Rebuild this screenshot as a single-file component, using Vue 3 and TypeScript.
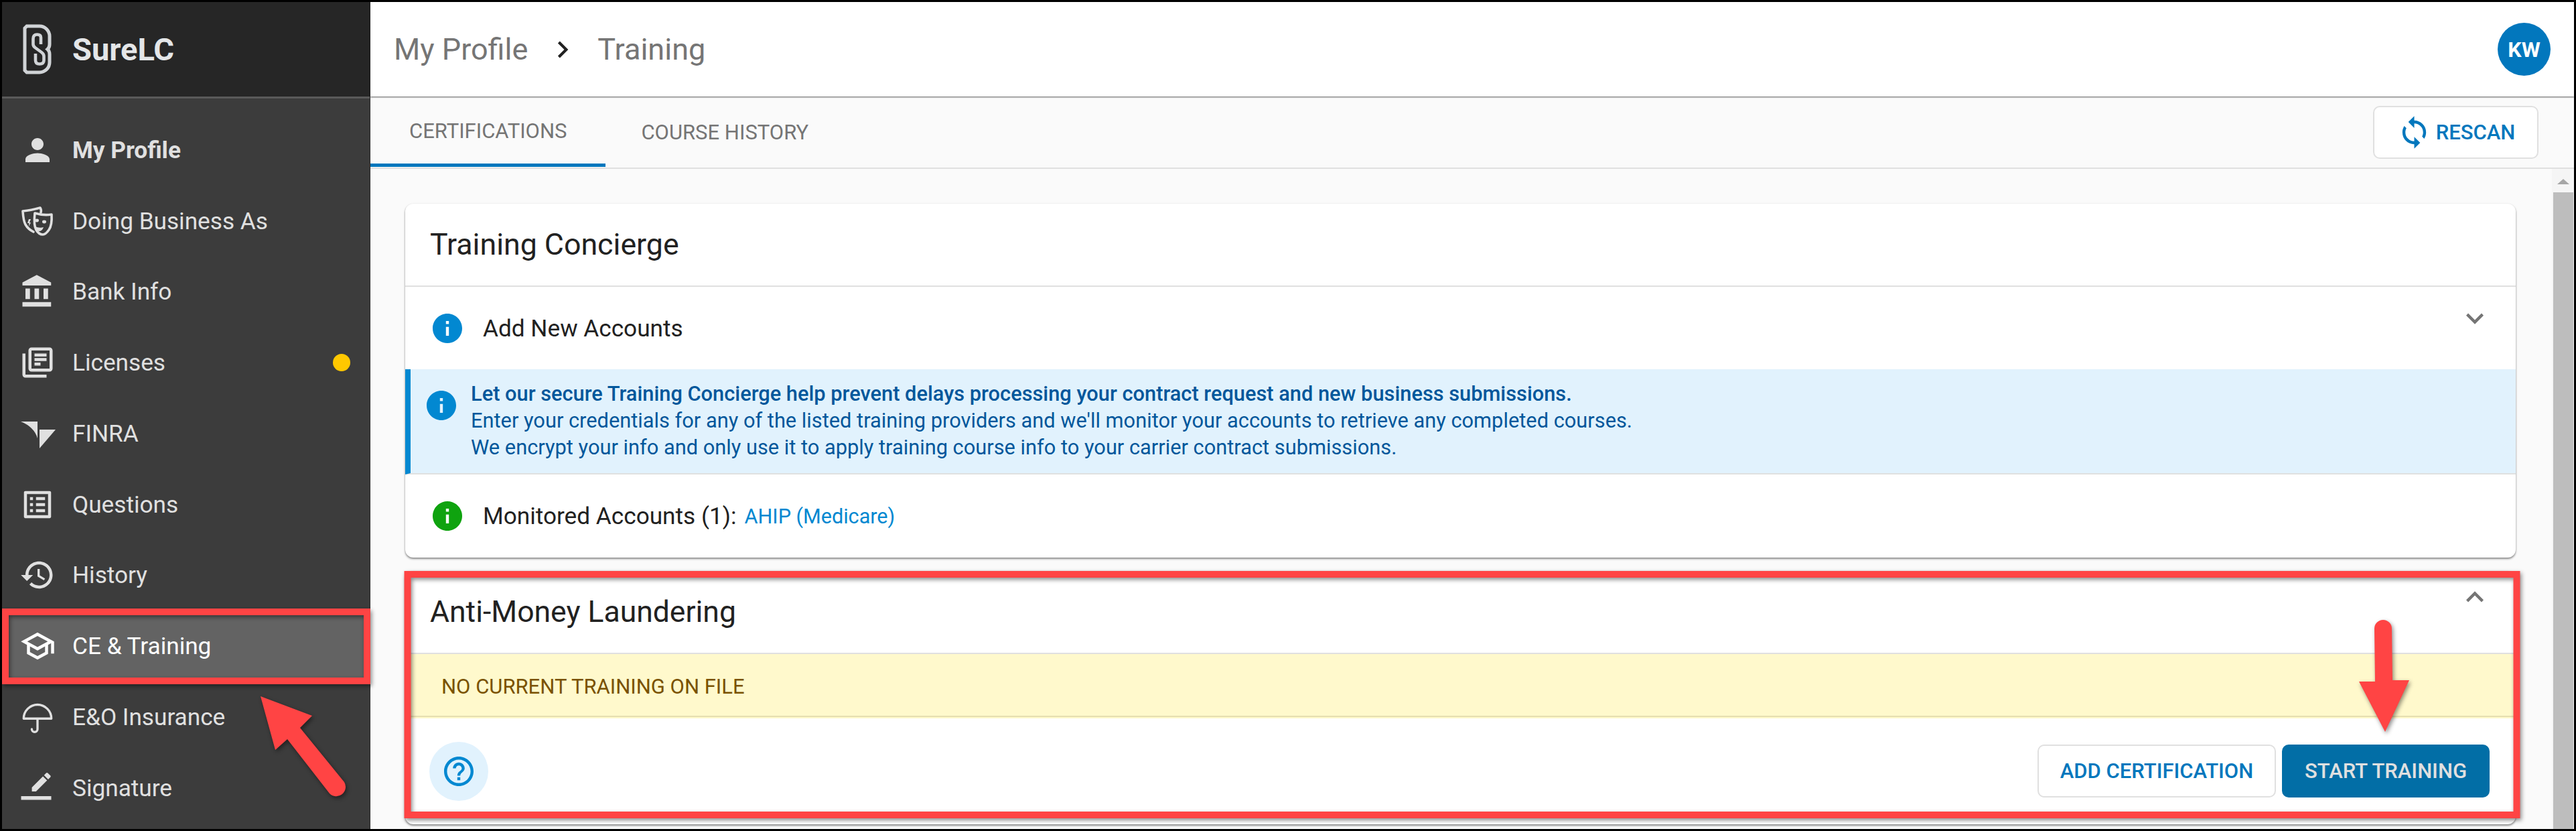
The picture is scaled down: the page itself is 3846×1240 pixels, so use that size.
<script setup lang="ts">
interface Shape { d: string; stroke?: number }
interface NavItem { label: string; box: string; w: number; h: number; shapes: Shape[]; active?: boolean; strong?: boolean; dot?: boolean }

const nav: NavItem[] = [
  { label: 'My Profile', strong: true, box: '0 0 24 24', w: 54, h: 54, shapes: [{ d: 'M12 12c2.21 0 4-1.79 4-4s-1.79-4-4-4-4 1.79-4 4 1.79 4 4 4zm0 2c-2.67 0-8 1.34-8 4v2h16v-2c0-2.66-5.33-4-8-4z' }] },
  { label: 'Doing Business As', box: '0 0 64 60', w: 64, h: 60, shapes: [
    { d: 'M28 18 Q41 22 53 20 Q54 36 49 43 Q44 50 40 50 Q34 50 30 43 Q26 36 28 18Z', stroke: 3.6 },
    { d: 'M37 17 Q38 13 36 10 Q22 14 10 15 Q11 30 14 35 Q18 42 26 46', stroke: 3.6 },
    { d: 'M28 29a3 2.4 0 1 0 6 0a3 2.4 0 1 0-6 0zM39 31a3 2.4 0 1 0 6 0a3 2.4 0 1 0-6 0zM28 38 Q35 41 41 39 Q39 45 34 45 Q30 44 28 38Z' },
    { d: 'M19 27 L22 27 L20 32 L22 32 L19 38 L19.5 33 L17 33Z' }
  ] },
  { label: 'Bank Info', box: '0 0 24 24', w: 54, h: 54, shapes: [{ d: 'M4 10v7h3v-7H4zm6 0v7h3v-7h-3zM2 22h19v-3H2v3zm14-12v7h3v-7h-3zm-4.5-9L2 6v2h19V6l-9.5-5z' }] },
  { label: 'Licenses', dot: true, box: '0 0 24 24', w: 54, h: 54, shapes: [{ d: 'M4 6H2v14c0 1.1.9 2 2 2h14v-2H4V6zm16-4H8c-1.1 0-2 .9-2 2v12c0 1.1.9 2 2 2h12c1.1 0 2-.9 2-2V4c0-1.1-.9-2-2-2zm0 14H8V4h12v12zM10 9h8v2h-8zm0 3h4v2h-4zm0-6h8v2h-8z' }] },
  { label: 'FINRA', box: '0 -3 70 60', w: 70, h: 60, shapes: [{ d: 'M10 9H35V34Q30 17 10 9ZM38 21H62L38 49Z' }] },
  { label: 'Questions', box: '0 0 24 24', w: 54, h: 54, shapes: [{ d: 'M19 5v14H5V5h14m1.1-2H3.9c-.5 0-.9.4-.9.9v16.2c0 .4.4.9.9.9h16.2c.4 0 .9-.5.9-.9V3.9c0-.5-.5-.9-.9-.9zM11 7h6v2h-6V7zm0 4h6v2h-6v-2zm0 4h6v2h-6zM7 7h2v2H7zm0 4h2v2H7zm0 4h2v2H7z' }] },
  { label: 'History', box: '0 0 24 24', w: 54, h: 54, shapes: [{ d: 'M13 3c-4.97 0-9 4.03-9 9H1l3.89 3.89.07.14L9 12H6c0-3.87 3.13-7 7-7s7 3.13 7 7-3.13 7-7 7c-1.93 0-3.68-.79-4.94-2.06l-1.42 1.42C8.27 19.99 10.51 21 13 21c4.97 0 9-4.03 9-9s-4.03-9-9-9zm-1 5v5l4.28 2.54.72-1.21-3.5-2.08V8H12z' }] },
  { label: 'CE & Training', active: true, box: '0 0 24 24', w: 54, h: 54, shapes: [{ d: 'M12 3L1 9l4 2.18v6L12 21l7-3.82v-6l2-1.09V17h2V9L12 3zm6.82 6L12 12.72 5.18 9 12 5.28 18.82 9zM17 15.99l-5 2.73-5-2.73v-3.72L12 15l5-2.73v3.72z' }] },
  { label: 'E&O Insurance', box: '0 0 24 24', w: 54, h: 54, shapes: [{ d: 'M2.8 13a9.2 9.2 0 0 1 18.4 0zM12 13V20a1.9 1.9 0 0 1-3.8 0', stroke: 1.5 }] },
  { label: 'Signature', box: '0 0 54 54', w: 54, h: 54, shapes: [{ d: 'M41.3 15.6L35.1 9.4 18.6 25.9V32h6.2zM46.2 10.7c.64-.64.64-1.68 0-2.33L42.3 4.5a1.64 1.64 0 0 0-2.33 0L36.75 7.7 42.95 13.9zM2.5 39h45v5.5h-45z' }] }
]

const info = 'M12 2C6.48 2 2 6.48 2 12s4.48 10 10 10 10-4.48 10-10S17.52 2 12 2zm1 15h-2v-6h2v6zm0-8h-2V7h2v2z'
const help = 'M11 18h2v-2h-2v2zm1-16C6.48 2 2 6.48 2 12s4.48 10 10 10 10-4.48 10-10S17.52 2 12 2zm0 18c-4.41 0-8-3.59-8-8s3.59-8 8-8 8 3.59 8 8-3.59 8-8 8zm0-14c-2.21 0-4 1.79-4 4h2c0-1.1.9-2 2-2s2 .9 2 2c0 2-3 1.75-3 5h2c0-2.25 3-2.5 3-5 0-2.21-1.79-4-4-4z'
const sync = 'M12 4V1L8 5l4 4V6c3.31 0 6 2.69 6 6 0 1.01-.25 1.97-.7 2.8l1.46 1.46C19.54 15.03 20 13.57 20 12c0-4.42-3.58-8-8-8zm0 14c-3.31 0-6-2.69-6-6 0-1.01.25-1.97.7-2.8L5.24 7.74C4.46 8.97 4 10.43 4 12c0 4.42 3.58 8 8 8v3l4-4-4-4v3z'
</script>

<template>
  <div class="frame">
    <aside class="sidebar">
      <div class="brand">
        <svg class="logo" viewBox="0 0 43 75" width="43" height="75" aria-hidden="true">
          <path d="M6 3H25a15 15 0 0 1 15 15V30Q40 35 37 37.5Q40 40 40 45V57a15 15 0 0 1-15 15H6L3 69V6Z" fill="none" stroke="#d0d3d6" stroke-width="5"/>
          <path d="M27 30V20Q27 15.5 21.5 15.5Q15.5 15.5 15.5 22V30Q15.5 33 19 35.5L28 42Q31.5 44.5 31.5 48V54Q31.5 59.5 25 59.5Q19 59.5 19 54V44" fill="none" stroke="#d0d3d6" stroke-width="4.6"/>
        </svg>
        <span class="brand-name">SureLC</span>
      </div>
      <nav class="nav">
        <a v-for="item in nav" :key="item.label" class="nav-row" :class="{ active: item.active, strong: item.strong }">
          <span class="nav-icon">
            <svg :viewBox="item.box" :width="item.w" :height="item.h" aria-hidden="true">
              <path
                v-for="(s, i) in item.shapes"
                :key="i"
                :d="s.d"
                :fill="s.stroke ? 'none' : 'currentColor'"
                :stroke="s.stroke ? 'currentColor' : 'none'"
                :stroke-width="s.stroke || 0"
                stroke-linejoin="round"
                stroke-linecap="round"
              />
            </svg>
          </span>
          <span class="nav-label">{{ item.label }}</span>
          <span v-if="item.dot" class="dot"></span>
        </a>
      </nav>
    </aside>

    <main class="main">
      <header class="topbar">
        <div class="crumbs">
          <span>My Profile</span>
          <svg class="crumb-sep" viewBox="0 0 24 24" width="50" height="50" aria-hidden="true"><path d="M10 6L8.59 7.41 13.17 12l-4.58 4.59L10 18l6-6z" fill="#212121"/></svg>
          <span>Training</span>
        </div>
        <div class="avatar">KW</div>
      </header>

      <div class="tabbar">
        <div class="tabs">
          <div class="tab on">CERTIFICATIONS</div>
          <div class="tab two">COURSE HISTORY</div>
        </div>
        <button class="btn rescan">
          <svg viewBox="0 0 24 24" width="53" height="53" aria-hidden="true"><path :d="sync" fill="#0277bd"/></svg>
          <span>RESCAN</span>
        </button>
      </div>

      <div class="body">
        <div class="scroll">
          <section class="card">
            <h2 class="card-head">Training Concierge</h2>
            <div class="row expand">
              <svg class="ic" viewBox="2 2 20 20" width="44" height="44" aria-hidden="true"><path :d="info" fill="#0288d1"/></svg>
              <span class="row-text">Add New Accounts</span>
              <svg class="chev" viewBox="0 0 24 24" width="52" height="52" aria-hidden="true"><path d="M16.59 8.59L12 13.17 7.41 8.59 6 10l6 6 6-6z" fill="#757575"/></svg>
            </div>
            <div class="banner">
              <svg class="banner-ic" viewBox="2 2 20 20" width="44" height="44" aria-hidden="true"><path :d="info" fill="#0288d1"/></svg>
              <div class="banner-text">
                <div class="b">Let our secure Training Concierge help prevent delays processing your contract request and new business submissions.</div>
                <div>Enter your credentials for any of the listed training providers and we'll monitor your accounts to retrieve any completed courses.</div>
                <div>We encrypt your info and only use it to apply training course info to your carrier contract submissions.</div>
              </div>
            </div>
            <div class="row monitored">
              <svg class="ic" viewBox="2 2 20 20" width="44" height="44" aria-hidden="true"><path :d="info" fill="#0fa30f"/></svg>
              <span class="row-text">Monitored Accounts (1):</span>
              <a class="link">AHIP (Medicare)</a>
            </div>
          </section>

          <section class="card second">
            <div class="card-head split">
              <h2 class="title">Anti-Money Laundering</h2>
              <svg class="chev up" viewBox="0 0 24 24" width="52" height="52" aria-hidden="true"><path d="M12 8l-6 6 1.41 1.41L12 10.83l4.59 4.58L18 14z" fill="#757575"/></svg>
            </div>
            <div class="warning"><span>NO CURRENT TRAINING ON FILE</span></div>
            <div class="foot">
              <button class="help">
                <svg viewBox="2 2 20 20" width="44" height="44" aria-hidden="true"><path :d="help" fill="#0288d1"/></svg>
              </button>
              <div class="actions">
                <button class="btn add">ADD CERTIFICATION</button>
                <button class="btn start">START TRAINING</button>
              </div>
            </div>
          </section>
        </div>
        <div class="scrollbar">
          <div class="sb-arrow"></div>
          <div class="sb-thumb"></div>
        </div>
      </div>
    </main>

    <svg class="marks" width="3846" height="1240" viewBox="0 0 3846 1240" aria-hidden="true">
      <g class="mark">
        <rect x="8" y="913" width="540" height="103" fill="none" stroke="#ff4444" stroke-width="10"/>
        <rect x="608.5" y="857" width="3149" height="359" fill="none" stroke="#ff4444" stroke-width="10"/>
      </g>
      <g class="mark">
        <path d="M389 1039L466 1068L448 1086L514 1167A14 14 0 0 1 492 1184L429 1103L411 1119Z" fill="#ff4444"/>
        <path d="M3545 938A13 13 0 0 1 3571 938L3572 1015L3597 1015L3561 1092L3522 1017L3546 1017Z" fill="#ff4444"/>
      </g>
    </svg>
  </div>
</template>

<style scoped>
.frame {
  position: relative;
  width: 3846px;
  height: 1240px;
  box-sizing: border-box;
  border: 3px solid #000;
  display: flex;
  overflow: hidden;
  background: #fafafa;
  font-family: Roboto, "Liberation Sans", sans-serif;
  color: #212121;
}
.sidebar {
  width: 550px;
  flex: none;
  background: #3c3c3c;
  border-right: 1px solid #2c2c2c;
  box-sizing: border-box;
  color: #e0e0e0;
  display: flex;
  flex-direction: column;
}
.brand {
  height: 144px;
  flex: none;
  box-sizing: border-box;
  background: #262626;
  border-bottom: 3px solid #5a5a5a;
  display: flex;
  align-items: center;
  padding-left: 31px;
  gap: 31px;
}
.logo { flex: none; }
.brand-name { font-size: 47px; font-weight: 700; color: #e4e6e8; }
.nav { padding-top: 24px; display: flex; flex-direction: column; }
.nav-row {
  height: 105.75px;
  display: flex;
  align-items: center;
  padding: 0 29px 0 23px;
  font-size: 35.2px;
}
.nav-row.strong { font-weight: 700; }
.nav-row.active { background: #636363; color: #fff; }
.nav-icon { width: 59px; margin-right: 23px; display: flex; justify-content: center; flex: none; }
.nav-icon svg { flex: none; display: block; }
.nav-label { flex: 1; }
.dot { width: 26px; height: 26px; border-radius: 50%; background: #ffc800; }

.main { flex: 1; min-width: 0; display: flex; flex-direction: column; }
.topbar {
  height: 141px;
  flex: none;
  background: #fff;
  box-shadow: 0 1px 2px rgba(0, 0, 0, 0.65);
  display: flex;
  align-items: center;
  justify-content: space-between;
  padding: 0 35px 0 35px;
  position: relative;
}
.crumbs { display: flex; align-items: center; font-size: 45px; color: #757575; }
.crumb-sep { margin: 0 27px 0 27px; }
.avatar {
  width: 79px;
  height: 79px;
  border-radius: 50%;
  background: #0277bd;
  color: #fff;
  font-weight: 700;
  font-size: 32px;
  display: flex;
  align-items: center;
  justify-content: center;
}
.tabbar {
  height: 108px;
  flex: none;
  box-sizing: border-box;
  background: #fafafa;
  border-bottom: 2px solid #e0e0e0;
  display: flex;
  align-items: stretch;
  justify-content: space-between;
  padding-right: 53px;
}
.tabs { display: flex; }
.tab {
  font-size: 31px;
  color: #757575;
  display: flex;
  align-items: center;
  padding: 0 58px;
}
.tab.on { border-bottom: 5px solid #0277bd; padding-top: 2px; margin-bottom: 1px; }
.tab.two { padding: 0 0 0 53px; }
.btn {
  font-family: inherit;
  font-size: 31px;
  font-weight: 500;
  border-radius: 10px;
  cursor: pointer;
}
.rescan {
  align-self: center;
  width: 247px;
  height: 79px;
  box-sizing: border-box;
  background: #fff;
  border: 2px solid #e0e0e0;
  color: #0277bd;
  display: flex;
  align-items: center;
  justify-content: center;
  gap: 6px;
  padding: 0;
}
.body { flex: 1; min-height: 0; display: flex; }
.scroll { flex: 1; min-width: 0; padding: 52px 54px 0 52px; overflow: hidden; }
.card {
  background: #fff;
  border-radius: 12px;
  box-shadow: 0 2px 3px rgba(0, 0, 0, 0.45), 0 0 3px rgba(0, 0, 0, 0.06);
}
.card.second { margin-top: 20px; height: 378px; box-sizing: border-box; }
.card-head {
  margin: 0;
  height: 124px;
  box-sizing: border-box;
  border-bottom: 2px solid #e0e0e0;
  padding-left: 37px;
  font-size: 44.7px;
  font-weight: 400;
  display: flex;
  align-items: center;
}
.split { justify-content: space-between; padding-right: 35px; }
.title { margin: 0; font-size: 44.5px; font-weight: 400; }
.row { display: flex; align-items: center; padding: 0 35px 0 41px; }
.ic { flex: none; margin-right: 31px; }
.row-text { font-size: 35.2px; }
.expand { height: 123px; }
.chev { flex: none; }
.expand .chev { margin-left: auto; align-self: flex-start; margin-top: 21px; }
.chev.up { align-self: flex-start; margin-top: 13px; }
.banner {
  height: 157px;
  box-sizing: border-box;
  background: #e1f2fd;
  border-left: 8px solid #0288d1;
  border-bottom: 2px solid #e0e0e0;
  padding: 17px 0 0 24px;
  display: flex;
  gap: 22px;
  color: #01579b;
  font-size: 30.8px;
  line-height: 40px;
}
.banner-ic { flex: none; margin-top: 15px; }
.banner-text .b { font-weight: 500; }
.monitored { height: 124px; }
.link { font-size: 30.6px; color: #0288d1; margin-left: 12px; }
.warning {
  height: 96px;
  box-sizing: border-box;
  background: #fff9cc;
  padding: 0 0 0 54px;
  position: relative;
  display: flex;
  align-items: center;
  font-size: 31px;
  color: #7a5200;
}
.warning::after {
  content: '';
  position: absolute;
  left: 0;
  right: 0;
  bottom: 2px;
  height: 2px;
  background: #e6dfb0;
}
.foot {
  height: 157px;
  display: flex;
  align-items: center;
  justify-content: space-between;
  padding: 0 39px 0 36px;
}
.help {
  width: 88px;
  height: 88px;
  border-radius: 50%;
  border: 0;
  padding: 0;
  background: #e1f2fd;
  display: flex;
  align-items: center;
  justify-content: center;
}
.actions { display: flex; gap: 9px; }
.add {
  width: 356px;
  height: 79px;
  background: #fff;
  border: 2px solid #e0e0e0;
  color: #0277bd;
  padding: 0;
}
.start {
  width: 310px;
  height: 79px;
  background: #026ea6;
  border: 0;
  color: #e0e0e0;
  padding: 0;
}
.scrollbar { width: 33px; flex: none; background: #f5f5f5; display: flex; flex-direction: column; align-items: center; }
.sb-arrow {
  margin-top: 15px;
  width: 0;
  height: 0;
  border-left: 9px solid transparent;
  border-right: 9px solid transparent;
  border-bottom: 8px solid #a6a6a6;
}
.sb-thumb { margin-top: 12px; width: 30px; flex: 1; background: #bdbdbd; }
.marks { position: absolute; left: -3px; top: -3px; pointer-events: none; }
.mark { filter: drop-shadow(2px 3px 3px rgba(0, 0, 0, 0.45)); }
</style>
